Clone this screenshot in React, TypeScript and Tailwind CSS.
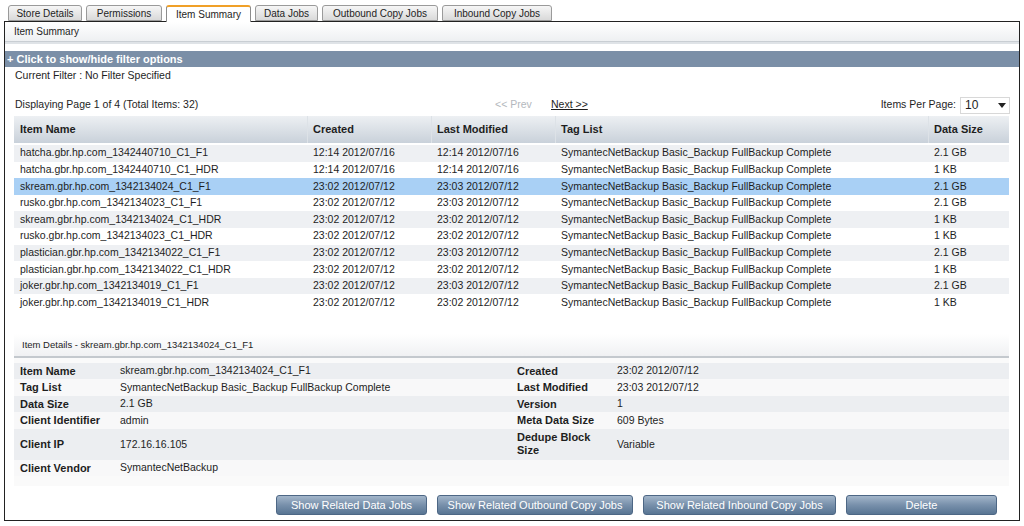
const TABS = ["Store Details", "Permissions", "Item Summary", "Data Jobs", "Outbound Copy Jobs", "Inbound Copy Jobs"];
const TAB_W = [74, 76, 85, 63, 116, 110];

const ROWS = [
  ["hatcha.gbr.hp.com_1342440710_C1_F1", "12:14 2012/07/16", "12:14 2012/07/16", "2.1 GB"],
  ["hatcha.gbr.hp.com_1342440710_C1_HDR", "12:14 2012/07/16", "12:14 2012/07/16", "1 KB"],
  ["skream.gbr.hp.com_1342134024_C1_F1", "23:02 2012/07/12", "23:03 2012/07/12", "2.1 GB"],
  ["rusko.gbr.hp.com_1342134023_C1_F1", "23:02 2012/07/12", "23:03 2012/07/12", "2.1 GB"],
  ["skream.gbr.hp.com_1342134024_C1_HDR", "23:02 2012/07/12", "23:02 2012/07/12", "1 KB"],
  ["rusko.gbr.hp.com_1342134023_C1_HDR", "23:02 2012/07/12", "23:02 2012/07/12", "1 KB"],
  ["plastician.gbr.hp.com_1342134022_C1_F1", "23:02 2012/07/12", "23:03 2012/07/12", "2.1 GB"],
  ["plastician.gbr.hp.com_1342134022_C1_HDR", "23:02 2012/07/12", "23:02 2012/07/12", "1 KB"],
  ["joker.gbr.hp.com_1342134019_C1_F1", "23:02 2012/07/12", "23:03 2012/07/12", "2.1 GB"],
  ["joker.gbr.hp.com_1342134019_C1_HDR", "23:02 2012/07/12", "23:02 2012/07/12", "1 KB"],
];

const TAG = "SymantecNetBackup Basic_Backup FullBackup Complete";

const DETAILS = [
  { l: "Item Name", v: "skream.gbr.hp.com_1342134024_C1_F1", rl: "Created", rv: "23:02 2012/07/12", h: "h-[16.5px]" },
  { l: "Tag List", v: TAG, rl: "Last Modified", rv: "23:03 2012/07/12", h: "h-[16.5px]" },
  { l: "Data Size", v: "2.1 GB", rl: "Version", rv: "1", h: "h-[16.5px]" },
  { l: "Client Identifier", v: "admin", rl: "Meta Data Size", rv: "609 Bytes", h: "h-[16.5px]" },
  { l: "Client IP", v: "172.16.16.105", rl: "Dedupe Block Size", rv: "Variable", h: "h-[31px]" },
  { l: "Client Vendor", v: "SymantecNetBackup", rl: "", rv: "", h: "h-[16.5px]" },
];

const BUTTONS = [
  { label: "Show Related Data Jobs", w: "w-[151px]" },
  { label: "Show Related Outbound Copy Jobs", w: "w-[196px]" },
  { label: "Show Related Inbound Copy Jobs", w: "w-[193px]" },
  { label: "Delete", w: "w-[151px]" },
];

export default function App() {
  return (
    <div className="w-[1024px] h-[526px] bg-white text-[10.5px] text-[#1e1e1e] font-['Liberation_Sans',Arial,sans-serif] overflow-hidden">
      {/* Tabs */}
      <div className="flex items-end gap-[4px] pl-[8px] pt-[4px] h-[21px] relative z-10 text-[10px]">
        {TABS.map((t, i) => {
          const active = t === "Item Summary";
          return (
            <div
              key={t}
              style={{ width: TAB_W[i] }}
              className={
                active
                  ? "h-[17px] -mb-px bg-white border border-b-0 border-[#8c8c8c] border-t-2 border-t-[#f0a028] rounded-t-[3px] flex items-center justify-center"
                  : "h-[16px] bg-gradient-to-b from-[#f6f6f6] to-[#d9d9d9] border border-[#9a9a9a] rounded-t-[3px] flex items-center justify-center"
              }
            >
              {t}
            </div>
          );
        })}
      </div>

      {/* Panel */}
      <div className="ml-[4px] w-[1016px] h-[500px] border border-[#222] flex flex-col">
        <div className="h-[19px] pl-[9px] flex items-center text-[10px] bg-gradient-to-b from-white to-[#eef0f2]">Item Summary</div>
        <div className="h-[3px] border-t border-[#c9ced3] bg-[#dfe3e7]" />
        <div className="h-[7px]" />
        <div className="h-[16px] bg-[#7b8fa7] text-white font-bold text-[11px] pl-[2px] flex items-center">
          + Click to show/hide filter options
        </div>
        <div className="h-[18px] pl-[10px] flex items-center">Current Filter : No Filter Specified</div>

        {/* Pager */}
        <div className="mt-[11px] h-[18px] pl-[10px] pr-[9px] flex items-center">
          <span className="w-[480px]">Displaying Page 1 of 4 (Total Items: 32)</span>
          <span className="w-[56px] text-[#b4b8bd]">&lt;&lt; Prev</span>
          <span className="underline">Next &gt;&gt;</span>
          <span className="ml-auto mr-[4px]">Items Per Page:</span>
          <div className="w-[50px] h-[17px] border border-[#d8d8d8] flex items-center pl-[4px] text-[12px]">
            <span>10</span>
            <svg className="ml-auto mr-[3px]" width="8" height="5" viewBox="0 0 8 5">
              <path d="M0 0h8L4 5z" fill="#222" />
            </svg>
          </div>
        </div>

        {/* Table */}
        <div className="ml-[9px] w-[995px] mt-[2px]">
          <div className="h-[27px] flex items-center font-bold text-[11px] bg-gradient-to-b from-[#edf0f3] to-[#c9d1da]">
            <div className="w-[294px] pl-[6px] h-full flex items-center border-r border-[#dde2e7]">Item Name</div>
            <div className="w-[124px] pl-[5px] h-full flex items-center border-r border-[#dde2e7]">Created</div>
            <div className="w-[124px] pl-[5px] h-full flex items-center border-r border-[#dde2e7]">Last Modified</div>
            <div className="w-[373px] pl-[5px] h-full flex items-center border-r border-[#dde2e7]">Tag List</div>
            <div className="w-[80px] pl-[5px] h-full flex items-center">Data Size</div>
          </div>
          <div className="h-[2px]" />
          {ROWS.map((r, i) => (
            <div
              key={r[0]}
              className={
                "h-[16.6px] flex items-center " +
                (i === 2 ? "bg-[#a9d0f5]" : i % 2 === 0 ? "bg-[#eef0f3]" : "bg-white")
              }
            >
              <div className="w-[294px] pl-[6px]">{r[0]}</div>
              <div className="w-[124px] pl-[5px]">{r[1]}</div>
              <div className="w-[124px] pl-[5px]">{r[2]}</div>
              <div className="w-[373px] pl-[5px]">{TAG}</div>
              <div className="w-[80px] pl-[5px]">{r[3]}</div>
            </div>
          ))}
        </div>

        {/* Item details */}
        <div className="ml-[9px] w-[995px] mt-[23px]">
          <div className="h-[22px] pl-[8px] flex items-center text-[9.5px] bg-gradient-to-b from-white to-[#f0f1f3]">
            Item Details - skream.gbr.hp.com_1342134024_C1_F1
          </div>
          <div className="h-[2px] bg-[#c4c9ce]" />
          <div className="h-[5px] bg-[#fafafa]" />
          {DETAILS.map((d, i) => (
            <div key={d.l} className={d.h + " flex items-center " + (i % 2 === 0 ? "bg-[#eceef1]" : "bg-[#f8f8f9]")}>
              <div className="w-[106px] pl-[6px] font-bold text-[11px]">{d.l}</div>
              <div className="w-[397px]">{d.v}</div>
              <div className="w-[100px] pr-[14px] font-bold text-[11px] leading-[13px]">{d.rl}</div>
              <div>{d.rv}</div>
            </div>
          ))}
          <div className="h-[10px] bg-[#fafafa]" />
        </div>

        {/* Buttons */}
        <div className="mt-auto mb-[5px] flex gap-[10px] pl-[271px]">
          {BUTTONS.map((b) => (
            <button
              key={b.label}
              className={
                b.w +
                " h-[20px] rounded-[3px] border border-[#4d6785] bg-gradient-to-b from-[#a3b6ca] via-[#7890ab] to-[#587593] text-white text-[11px] font-['Liberation_Sans',Arial,sans-serif]"
              }
            >
              {b.label}
            </button>
          ))}
        </div>
      </div>
    </div>
  );
}
